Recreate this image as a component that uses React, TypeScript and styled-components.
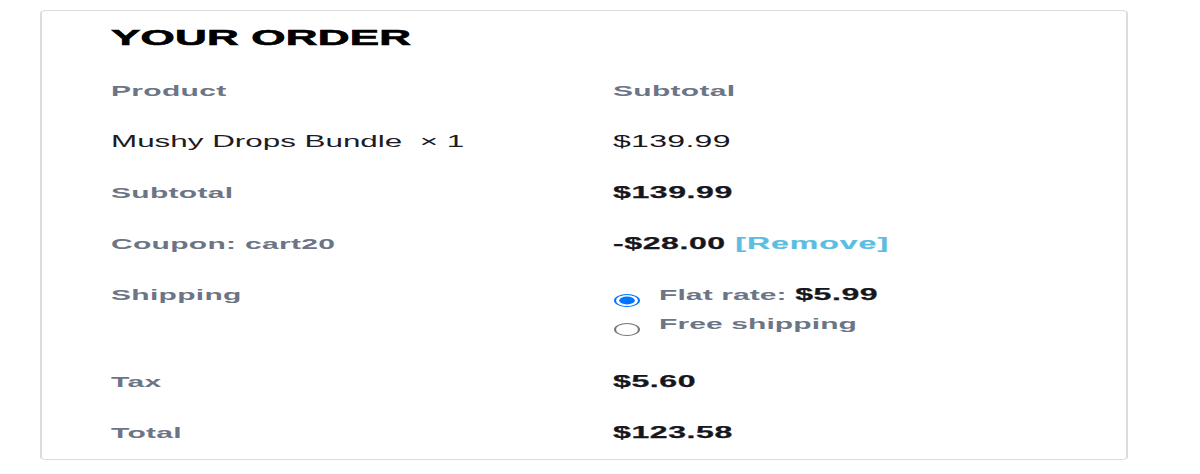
import React from 'react';
import styled, { createGlobalStyle } from 'styled-components';

const GlobalStyle = createGlobalStyle`
  html, body {
    margin: 0;
    padding: 0;
    background: #ffffff;
    overflow: hidden;
  }
  body {
    font-family: 'Liberation Sans', Arial, sans-serif;
  }
`;

// the reference is stretched 2x horizontally, so the page is laid out at half width
const Stretch = styled.div`
  width: 600px;
  padding: 10px 0 0 20px;
  transform: scaleX(2);
  transform-origin: 0 0;
`;

const Card = styled.section`
  width: 544px;
  box-sizing: border-box;
  border: 1px solid #dcdcdc;
  border-radius: 3px;
  padding: 14px 20px 1px 34.5px;
`;

const Heading = styled.h3`
  margin: 0 0 14px;
  font-size: 22px;
  line-height: 26px;
  font-weight: 700;
  color: #000000;
  text-transform: uppercase;
  letter-spacing: 0.1px;
  -webkit-text-stroke: 0.6px #000000;
`;

const Row = styled.div`
  display: grid;
  grid-template-columns: 251px 1fr;
  align-items: start;
  padding: 14px 0;
  line-height: 23px;
`;

const Label = styled.div<{ $plain?: boolean }>`
  font-size: ${(p) => (p.$plain ? '15.7px' : '15px')};
  font-weight: ${(p) => (p.$plain ? 400 : 700)};
  color: ${(p) => (p.$plain ? '#1c1c24' : '#6c7586')};
  letter-spacing: ${(p) => (p.$plain ? '0' : '0.15px')};
  white-space: pre;
`;

const Value = styled.div<{ $bold?: boolean; $muted?: boolean }>`
  font-size: ${(p) => (p.$muted ? '15px' : '16px')};
  font-weight: ${(p) => (p.$bold || p.$muted ? 700 : 400)};
  color: ${(p) => (p.$muted ? '#6c7586' : '#16161c')};
  letter-spacing: ${(p) => (p.$bold ? '0.3px' : '0.15px')};
  -webkit-text-stroke: ${(p) => (p.$bold ? '0.25px #16161c' : '0')};
`;

const Amount = styled.span`
  font-size: 16px;
  font-weight: 700;
  color: #16161c;
  letter-spacing: 0.3px;
  -webkit-text-stroke: 0.25px #16161c;
`;

const RemoveLink = styled.a`
  font-size: 16px;
  font-weight: 700;
  color: #5bbde2;
  text-decoration: none;
  letter-spacing: 0.5px;
  -webkit-text-stroke: 0.2px #5bbde2;
  cursor: pointer;
`;

const Methods = styled.ul`
  list-style: none;
  margin: 0 0 6px;
  padding: 0;
`;

const Method = styled.li`
  display: flex;
  align-items: flex-start;
  & + & {
    margin-top: 5px;
  }
`;

const Radio = styled.input`
  width: 13px;
  height: 13px;
  margin: 11px 10px 0 0;
  flex: none;
`;

const MethodLabel = styled.label`
  font-size: 15px;
  font-weight: 700;
  color: #6c7586;
  letter-spacing: 0.05px;
`;

export default function App(): JSX.Element {
  const [method, setMethod] = React.useState('flat');

  return (
    <>
      <GlobalStyle />
      <Stretch>
        <Card>
          <Heading>Your order</Heading>
          <Row>
            <Label>Product</Label>
            <Value $muted>Subtotal</Value>
          </Row>
          <Row>
            <Label $plain>{'Mushy Drops Bundle  × 1'}</Label>
            <Value>$139.99</Value>
          </Row>
          <Row>
            <Label>Subtotal</Label>
            <Value $bold>$139.99</Value>
          </Row>
          <Row>
            <Label>Coupon: cart20</Label>
            <Value $bold>
              -$28.00 <RemoveLink>[Remove]</RemoveLink>
            </Value>
          </Row>
          <Row>
            <Label>Shipping</Label>
            <Methods>
              <Method>
                <Radio
                  type="radio"
                  name="shipping"
                  id="flat"
                  checked={method === 'flat'}
                  onChange={() => setMethod('flat')}
                />
                <MethodLabel htmlFor="flat">
                  Flat rate: <Amount>$5.99</Amount>
                </MethodLabel>
              </Method>
              <Method>
                <Radio
                  type="radio"
                  name="shipping"
                  id="free"
                  checked={method === 'free'}
                  onChange={() => setMethod('free')}
                />
                <MethodLabel htmlFor="free">Free shipping</MethodLabel>
              </Method>
            </Methods>
          </Row>
          <Row>
            <Label>Tax</Label>
            <Value $bold>$5.60</Value>
          </Row>
          <Row>
            <Label>Total</Label>
            <Value $bold>$123.58</Value>
          </Row>
        </Card>
      </Stretch>
    </>
  );
}
